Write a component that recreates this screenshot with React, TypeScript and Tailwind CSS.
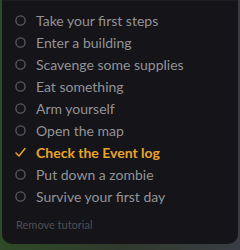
import React from "react";

const items = [
  "Take your first steps",
  "Enter a building",
  "Scavenge some supplies",
  "Eat something",
  "Arm yourself",
  "Open the map",
  "Check the Event log",
  "Put down a zombie",
  "Survive your first day",
];

export default function App() {
  return (
    <div
      className="w-[240px] h-[250px] overflow-hidden bg-gradient-to-r from-[#2e4a26] via-[#2f3a2c] to-[#3a3d44]"
      style={{ fontFamily: "Lato, 'Liberation Sans', sans-serif" }}
    >
      <div className="ml-[2px] w-[236px] h-[244px] bg-[#141419] rounded-b-[10px] border-t border-[#1c1c22] pt-[8px] flex flex-col">
        <ul className="flex flex-col">
          {items.map((t, i) => {
            const done = i === 6;
            return (
              <li key={t} className="h-[22px] flex items-center pl-[13px]">
                <span className="w-[11px] h-[11px] flex items-center justify-center mr-[10px]">
                  {done ? (
                    <svg width="11" height="11" viewBox="0 0 11 11" fill="none" className="shrink-0">
                      <path d="M1 6 L4 9 L10 1.5" stroke="#e9a42c" strokeWidth="1.5" strokeLinecap="round" strokeLinejoin="round" />
                    </svg>
                  ) : (
                    <svg width="11" height="11" viewBox="0 0 11 11" fill="none">
                      <circle cx="5.5" cy="5.5" r="4.6" stroke="#5a5a60" strokeWidth="1.3" />
                    </svg>
                  )}
                </span>
                <span
                  className={
                    done
                      ? "text-[14px] font-bold text-[#e9a42c]"
                      : "text-[14px] text-[#939397]"
                  }
                >
                  {t}
                </span>
              </li>
            );
          })}
        </ul>
        <div className="pl-[14px] mt-[10px] text-[11px] text-[#4f4f55]">Remove tutorial</div>
      </div>
    </div>
  );
}
